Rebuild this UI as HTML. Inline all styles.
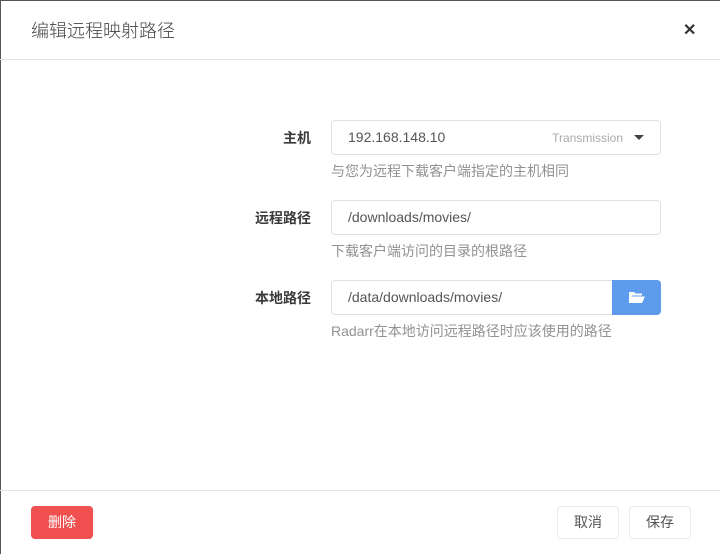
<!DOCTYPE html>
<html><head><meta charset="utf-8"><style>
*{box-sizing:border-box;margin:0;padding:0}
body{width:720px;height:554px;background:#fff;font-family:"Liberation Sans","Noto Sans CJK SC",sans-serif;position:relative;overflow:hidden}
.abs{position:absolute}
.title{left:31px;top:17px;font-size:18px;color:#444;font-weight:300}
.close{left:683px;top:20px;font-size:16px;color:#333;font-weight:bold}
.hr{left:0;width:720px;height:1px;background:#e5e5e5}
.lbl{width:100px;left:211px;text-align:right;font-size:14px;font-weight:bold;color:#3a3a3a}
.inp{left:331px;width:330px;height:35px;border:1px solid #dde0e3;border-radius:4px;font-size:14px;color:#555;padding:8px 16px;line-height:17px}
.help{left:331px;font-size:14px;color:#909293}
.btn{height:33px;border:1px solid #eaeaea;border-radius:4px;font-size:14px;color:#555;text-align:center;line-height:31px;top:506px;width:62px}
</style></head><body>
<div class="abs" style="left:0;top:0;width:720px;height:1px;background:#555"></div>
<div class="abs" style="left:0;top:0;width:1px;height:554px;background:#555"></div>
<div class="abs title">编辑远程映射路径</div>
<div class="abs close">✕</div>
<div class="abs hr" style="top:59px"></div>

<div class="abs lbl" style="top:128px">主机</div>
<div class="abs inp" style="top:120px">192.168.148.10
<span style="position:absolute;right:37px;top:9px;font-size:12px;color:#aaa">Transmission</span>
<span style="position:absolute;right:16px;top:14px;width:0;height:0;border-left:5px solid transparent;border-right:5px solid transparent;border-top:5px solid #444"></span></div>
<div class="abs help" style="top:161px">与您为远程下载客户端指定的主机相同</div>

<div class="abs lbl" style="top:208px">远程路径</div>
<div class="abs inp" style="top:200px">/downloads/movies/</div>
<div class="abs help" style="top:241px">下载客户端访问的目录的根路径</div>

<div class="abs lbl" style="top:288px">本地路径</div>
<div class="abs inp" style="top:280px;width:282px;border-radius:4px 0 0 4px">/data/downloads/movies/</div>
<div class="abs" style="left:612px;top:280px;width:49px;height:35px;background:#5d9cec;border-radius:0 4px 4px 0">
<svg width="49" height="35" viewBox="0 0 49 35"><path d="M17 12h5l1.5 1.5H30v2H20l-3 7z" fill="#fff"/><path d="M19.5 16.5H33l-3 6.5H16.5z" fill="#fff"/></svg></div>
<div class="abs help" style="top:321px">Radarr在本地访问远程路径时应该使用的路径</div>

<div class="abs hr" style="top:490px"></div>
<div class="abs btn" style="left:31px;background:#f05050;border-color:#f05050;color:#fff">删除</div>
<div class="abs btn" style="left:557px">取消</div>
<div class="abs btn" style="left:629px">保存</div>
</body></html>
